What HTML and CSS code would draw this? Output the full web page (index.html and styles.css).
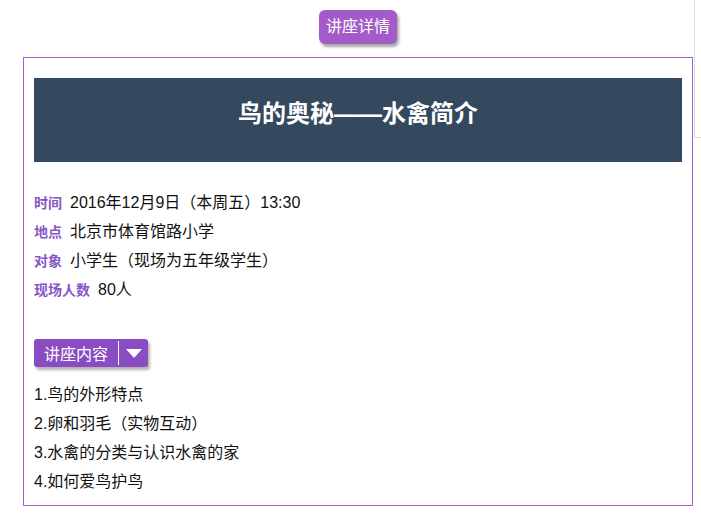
FILE: index.html
```html
<!DOCTYPE html>
<html lang="zh-CN">
<head>
    <meta charset="UTF-8">
    <meta name="viewport" content="width=device-width, initial-scale=1.0">
    <title>讲座详情</title>
    <link rel="stylesheet" href="styles.css">
</head>
<body>
    <div class="page">
        <div class="main">
            <div class="head">
                <span class="detail-btn">讲座详情</span>
            </div>

            <div class="card">
                <h1 class="banner">鸟的奥秘——水禽简介</h1>

                <div class="info">
                    <div class="row"><span class="label">时间</span>2016年12月9日（本周五）13:30</div>
                    <div class="row"><span class="label">地点</span>北京市体育馆路小学</div>
                    <div class="row"><span class="label">对象</span>小学生（现场为五年级学生）</div>
                    <div class="row"><span class="label">现场人数</span>80人</div>
                </div>

                <div class="toggle">
                    <span class="toggle-text">讲座内容</span>
                    <span class="toggle-line"></span>
                    <span class="caret"></span>
                </div>

                <ul class="topics">
                    <li>1.鸟的外形特点</li>
                    <li>2.卵和羽毛（实物互动）</li>
                    <li>3.水禽的分类与认识水禽的家</li>
                    <li>4.如何爱鸟护鸟</li>
                </ul>
            </div>
        </div>
        <div class="side"></div>
    </div>
</body>
</html>
```

FILE: styles.css
```css
body {
    margin: 0;
    background-color: #ffffff;
    color: #111111;
    font-family: "Liberation Sans", "Noto Sans CJK SC", sans-serif;
}

.page {
    display: flex;
    align-items: flex-start;
}

.main {
    width: 694px;
    box-sizing: border-box;
    padding: 10px 1px 0 23px;
}

.side {
    flex: 1;
    height: 137px;
    border-left: 1px solid #dddddd;
    border-bottom: 1px solid #dddddd;
}

.head {
    text-align: center;
    height: 34px;
}

.detail-btn {
    display: inline-block;
    height: 34px;
    line-height: 34px;
    padding: 0 7px;
    background-color: #a45ac8;
    color: #ffffff;
    font-size: 16px;
    border-radius: 6px;
    box-shadow: 2px 3px 3px rgba(0, 0, 0, 0.35);
}

.card {
    margin-top: 13px;
    border: 1px solid #a45bd5;
    padding: 20px 10px 9px;
}

.banner {
    margin: 0 0 26px;
    height: 84px;
    box-sizing: border-box;
    padding-top: 18px;
    line-height: 36px;
    background-color: #34495e;
    color: #ffffff;
    font-size: 24px;
    font-weight: bold;
    text-align: center;
}

.row {
    display: flex;
    align-items: baseline;
    height: 29px;
    line-height: 29px;
    font-size: 16px;
}

.label {
    margin-right: 8px;
    color: #8656c4;
    font-size: 14px;
    font-weight: bold;
}

.toggle {
    display: inline-flex;
    align-items: center;
    height: 28px;
    margin-top: 35px;
    padding: 0 6px 0 10px;
    background-color: #8a4cc2;
    color: #ffffff;
    font-size: 16px;
    border-radius: 3px;
    box-shadow: 2px 3px 3px rgba(0, 0, 0, 0.3);
}

.toggle-line {
    width: 1px;
    height: 24px;
    margin: 0 7px 0 10px;
    background-color: #ffffff;
}

.caret {
    width: 0;
    height: 0;
    border-left: 8px solid transparent;
    border-right: 8px solid transparent;
    border-top: 9px solid #ffffff;
}

.topics {
    list-style: none;
    margin: 13px 0 0;
    padding: 0;
}

.topics li {
    height: 29px;
    line-height: 29px;
    font-size: 16px;
}
```
